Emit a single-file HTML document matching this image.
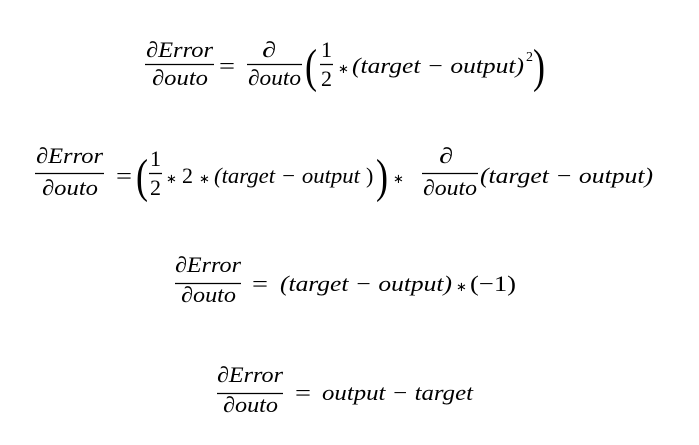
<!DOCTYPE html>
<html><head><meta charset="utf-8"><style>
html,body{margin:0;padding:0;background:#fff;}
svg{display:block}
text{font-family:"Liberation Serif",serif;font-style:italic;font-size:22px;fill:#000}
.n{font-style:normal}
.a{font-style:normal;font-size:13px}
</style></head><body>
<svg width="699" height="445" viewBox="0 0 699 445" xmlns="http://www.w3.org/2000/svg">
<g stroke="#000" stroke-width="1.3">
<line x1="145" y1="64.5" x2="214" y2="64.5"/>
<line x1="247" y1="64.5" x2="302" y2="64.5"/>
<line x1="320" y1="64.5" x2="333" y2="64.5"/>
<line x1="35" y1="173.5" x2="104" y2="173.5"/>
<line x1="149" y1="173.5" x2="162" y2="173.5"/>
<line x1="422" y1="173.5" x2="478" y2="173.5"/>
<line x1="175" y1="283.5" x2="241" y2="283.5"/>
<line x1="217" y1="393.5" x2="283" y2="393.5"/>
</g>
<!-- Eq1 -->
<text x="146" y="57" textLength="67" lengthAdjust="spacingAndGlyphs">∂Error</text>
<text x="152" y="85" textLength="56" lengthAdjust="spacingAndGlyphs">∂outo</text>
<text class="n" x="219" y="73" textLength="16" lengthAdjust="spacingAndGlyphs">=</text>
<text x="262" y="57" textLength="14" lengthAdjust="spacingAndGlyphs">∂</text>
<text x="248" y="85" textLength="53" lengthAdjust="spacingAndGlyphs">∂outo</text>
<text class="n" x="305" y="82" style="font-size:48px" textLength="12" lengthAdjust="spacingAndGlyphs">(</text>
<text class="n" x="321" y="57" textLength="11" lengthAdjust="spacingAndGlyphs">1</text>
<text class="n" x="321" y="86" textLength="11" lengthAdjust="spacingAndGlyphs">2</text>
<text class="a" x="338" y="73">∗</text>
<text x="352" y="73" textLength="172" lengthAdjust="spacingAndGlyphs">(target − output)</text>
<text class="n" x="526" y="61" style="font-size:14px">2</text>
<text class="n" x="533" y="82" style="font-size:48px" textLength="12" lengthAdjust="spacingAndGlyphs">)</text>
<!-- Eq2 -->
<text x="36" y="163" textLength="67" lengthAdjust="spacingAndGlyphs">∂Error</text>
<text x="42" y="195" textLength="56" lengthAdjust="spacingAndGlyphs">∂outo</text>
<text class="n" x="116" y="183" textLength="16" lengthAdjust="spacingAndGlyphs">=</text>
<text class="n" x="136" y="192" style="font-size:48px" textLength="12" lengthAdjust="spacingAndGlyphs">(</text>
<text class="n" x="150" y="166" textLength="11" lengthAdjust="spacingAndGlyphs">1</text>
<text class="n" x="150" y="195" textLength="11" lengthAdjust="spacingAndGlyphs">2</text>
<text class="a" x="166" y="183">∗</text>
<text class="n" x="182" y="183">2</text>
<text class="a" x="199" y="183">∗</text>
<text x="214" y="183" textLength="146" lengthAdjust="spacingAndGlyphs">(target − output</text>
<text class="n" x="366" y="183">)</text>
<text class="n" x="376" y="192" style="font-size:48px" textLength="12" lengthAdjust="spacingAndGlyphs">)</text>
<text class="a" x="393" y="183">∗</text>
<text x="439" y="163" textLength="14" lengthAdjust="spacingAndGlyphs">∂</text>
<text x="423" y="195" textLength="54" lengthAdjust="spacingAndGlyphs">∂outo</text>
<text x="480" y="183" textLength="173" lengthAdjust="spacingAndGlyphs">(target − output)</text>
<!-- Eq3 -->
<text x="175" y="272" textLength="66" lengthAdjust="spacingAndGlyphs">∂Error</text>
<text x="181" y="302" textLength="55" lengthAdjust="spacingAndGlyphs">∂outo</text>
<text class="n" x="252" y="291" textLength="16" lengthAdjust="spacingAndGlyphs">=</text>
<text x="280" y="291" textLength="172" lengthAdjust="spacingAndGlyphs">(target − output)</text>
<text class="a" x="456" y="291">∗</text>
<text class="n" x="470" y="291" textLength="46" lengthAdjust="spacingAndGlyphs">(−1)</text>
<!-- Eq4 -->
<text x="217" y="382" textLength="66" lengthAdjust="spacingAndGlyphs">∂Error</text>
<text x="223" y="412" textLength="55" lengthAdjust="spacingAndGlyphs">∂outo</text>
<text class="n" x="295" y="400" textLength="16" lengthAdjust="spacingAndGlyphs">=</text>
<text x="322" y="400" textLength="151" lengthAdjust="spacingAndGlyphs">output − target</text>
</svg>
</body></html>
